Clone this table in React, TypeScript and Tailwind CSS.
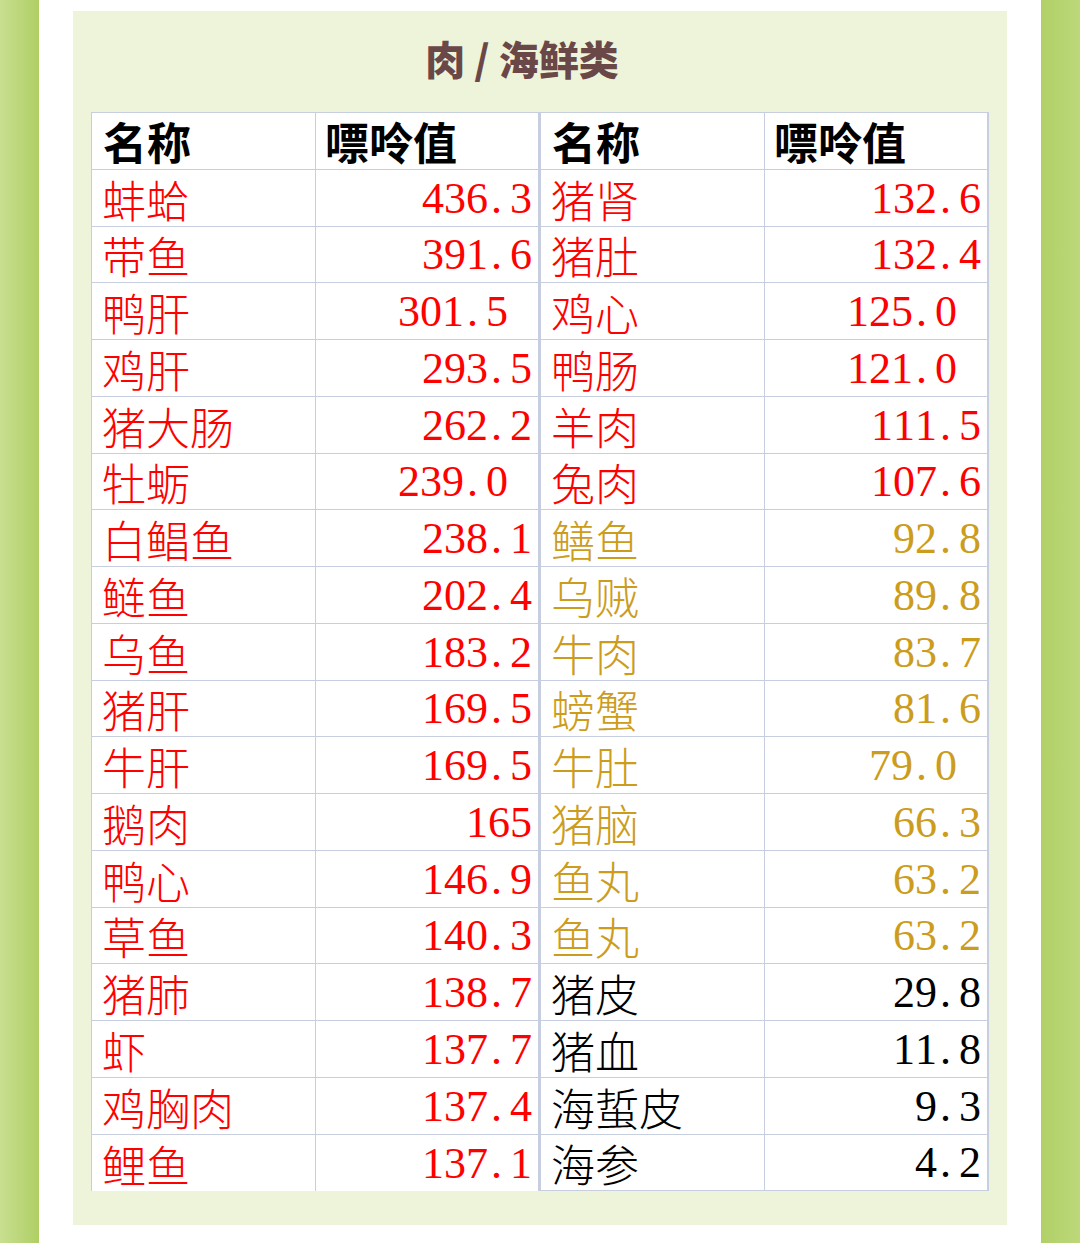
type Row = { name: string; value: string; color: string; shift?: boolean };

const RED = "text-[#ff0000]";
const GOLD = "text-[#cc9c1c]";
const BLACK = "text-black";

const left: Row[] = [
  { name: "蚌蛤", value: "436.3", color: RED },
  { name: "带鱼", value: "391.6", color: RED },
  { name: "鸭肝", value: "301.5", color: RED, shift: true },
  { name: "鸡肝", value: "293.5", color: RED },
  { name: "猪大肠", value: "262.2", color: RED },
  { name: "牡蛎", value: "239.0", color: RED, shift: true },
  { name: "白鲳鱼", value: "238.1", color: RED },
  { name: "鲢鱼", value: "202.4", color: RED },
  { name: "乌鱼", value: "183.2", color: RED },
  { name: "猪肝", value: "169.5", color: RED },
  { name: "牛肝", value: "169.5", color: RED },
  { name: "鹅肉", value: "165", color: RED },
  { name: "鸭心", value: "146.9", color: RED },
  { name: "草鱼", value: "140.3", color: RED },
  { name: "猪肺", value: "138.7", color: RED },
  { name: "虾", value: "137.7", color: RED },
  { name: "鸡胸肉", value: "137.4", color: RED },
  { name: "鲤鱼", value: "137.1", color: RED },
];

const right: Row[] = [
  { name: "猪肾", value: "132.6", color: RED },
  { name: "猪肚", value: "132.4", color: RED },
  { name: "鸡心", value: "125.0", color: RED, shift: true },
  { name: "鸭肠", value: "121.0", color: RED, shift: true },
  { name: "羊肉", value: "111.5", color: RED },
  { name: "兔肉", value: "107.6", color: RED },
  { name: "鳝鱼", value: "92.8", color: GOLD },
  { name: "乌贼", value: "89.8", color: GOLD },
  { name: "牛肉", value: "83.7", color: GOLD },
  { name: "螃蟹", value: "81.6", color: GOLD },
  { name: "牛肚", value: "79.0", color: GOLD, shift: true },
  { name: "猪脑", value: "66.3", color: GOLD },
  { name: "鱼丸", value: "63.2", color: GOLD },
  { name: "鱼丸", value: "63.2", color: GOLD },
  { name: "猪皮", value: "29.8", color: BLACK },
  { name: "猪血", value: "11.8", color: BLACK },
  { name: "海蜇皮", value: "9.3", color: BLACK },
  { name: "海参", value: "4.2", color: BLACK },
];

const cjk = "font-['Noto_Sans_CJK_SC',sans-serif]";

function Num({ v }: { v: string }) {
  // every char gets a half-width box, like SimSun digits
  return (
    <span className="font-['Liberation_Serif',serif] text-[44px] leading-none">
      {v.split("").map((c, i) => (
        <span key={i} className={`inline-block w-[22px] ${c === "." ? "text-left pl-[3px]" : "text-center"}`}>
          {c}
        </span>
      ))}
    </span>
  );
}

function Table({ rows, last }: { rows: Row[]; last?: boolean }) {
  return (
    <div className="flex flex-col border-l border-t border-[#c6cee0] bg-white">
      <div className="flex h-[56.75px] border-b border-[#c6cee0]">
        <div className={`w-[224px] border-r border-[#c6cee0] flex items-end pl-[11px] pb-[6px] ${cjk} font-bold text-[44px] leading-none text-black`}>
          名称
        </div>
        <div className={`w-[224px] border-r-2 border-[#c6cee0] flex items-end pl-[9px] pb-[6px] ${cjk} font-bold text-[44px] leading-none text-black`}>
          嘌呤值
        </div>
      </div>
      {rows.map((r, i) => (
        <div
          key={i}
          className={`flex h-[56.75px] ${i === rows.length - 1 && !last ? "" : "border-b border-[#c6cee0]"} ${r.color}`}
        >
          <div className={`w-[224px] border-r border-[#c6cee0] flex items-end pl-[10px] pb-[5px] ${cjk} font-light text-[44px] leading-none`}>
            {r.name}
          </div>
          <div
            className={`w-[224px] border-r-2 border-[#c6cee0] flex items-end justify-end pb-[5px] ${r.shift ? "pr-[30px]" : "pr-[6px]"}`}
          >
            <Num v={r.value} />
          </div>
        </div>
      ))}
    </div>
  );
}

export default function App() {
  return (
    <div className="flex w-[1080px] h-[1243px] bg-white">
      <div className="w-[40px] bg-gradient-to-r from-[#c8df90] to-[#afcf64]" />
      <main className="flex-1 px-[34px] pt-[11px] pb-[18px]">
        <div className="h-full bg-[#eef4da] flex flex-col px-[18px]">
          <h1 className={`h-[101px] flex items-center justify-center pr-[36px] pb-[8px] ${cjk} font-black text-[40px] text-[#6b4848]`}>
            肉 / 海鲜类
          </h1>
          <div className="flex">
            <Table rows={left} />
            <Table rows={right} last />
          </div>
        </div>
      </main>
      <div className="w-[40px] bg-gradient-to-r from-[#b1d066] to-[#bcd87a]" />
    </div>
  );
}
